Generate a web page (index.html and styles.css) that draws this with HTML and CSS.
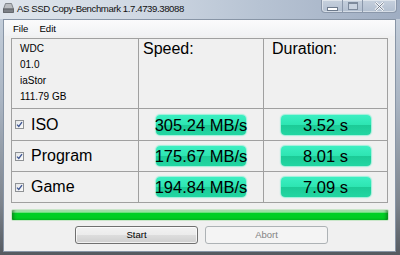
FILE: index.html
```html
<!DOCTYPE html>
<html>
<head>
<meta charset="utf-8">
<link rel="stylesheet" href="styles.css">
</head>
<body>
<div class="window">
  <div class="titlebar">
    <svg class="appicon" width="11" height="10" viewBox="0 0 11 10">
      <polygon points="2.5,0.5 8.5,0.5 10.5,6 0.5,6" fill="#b9bcc0" stroke="#6f7378" stroke-width="0.8"/>
      <rect x="0.5" y="6" width="10" height="3.5" fill="#7c8086" stroke="#55595e" stroke-width="0.8"/>
    </svg>
    <span class="title">AS SSD Copy-Benchmark 1.7.4739.38088</span>
    <div class="ctrls">
      <div class="cbtn min"><span class="minbar"></span></div>
      <div class="cbtn max"><span class="maxbox"></span></div>
      <div class="cbtn close">
        <svg width="11" height="9" viewBox="0 0 11 9"><path d="M1.5 0.8 L9.5 8.2 M9.5 0.8 L1.5 8.2" stroke="#ffffff" stroke-width="2.4"/><path d="M1.5 0.8 L9.5 8.2 M9.5 0.8 L1.5 8.2" stroke="#6d7a8c" stroke-width="1"/></svg>
      </div>
    </div>
  </div>
  <div class="client">
    <div class="menubar">
      <span class="menuitem">File</span>
      <span class="menuitem">Edit</span>
    </div>
    <div class="grid">
      <div class="cell info">
        <div>WDC</div>
        <div>01.0</div>
        <div>iaStor</div>
        <div>111.79 GB</div>
      </div>
      <div class="cell head speedhead">Speed:</div>
      <div class="cell head durhead">Duration:</div>

      <div class="cell label"><span class="chk"><svg width="7" height="7" viewBox="0 0 7 7"><path d="M1 3.6 L2.8 5.5 L6 1.2" fill="none" stroke="#3d5592" stroke-width="1.3"/></svg></span>ISO</div>
      <div class="cell val"><div class="pill">305.24 MB/s</div></div>
      <div class="cell val"><div class="pill">3.52 s</div></div>

      <div class="cell label"><span class="chk"><svg width="7" height="7" viewBox="0 0 7 7"><path d="M1 3.6 L2.8 5.5 L6 1.2" fill="none" stroke="#3d5592" stroke-width="1.3"/></svg></span>Program</div>
      <div class="cell val"><div class="pill">175.67 MB/s</div></div>
      <div class="cell val"><div class="pill">8.01 s</div></div>

      <div class="cell label"><span class="chk"><svg width="7" height="7" viewBox="0 0 7 7"><path d="M1 3.6 L2.8 5.5 L6 1.2" fill="none" stroke="#3d5592" stroke-width="1.3"/></svg></span>Game</div>
      <div class="cell val"><div class="pill">194.84 MB/s</div></div>
      <div class="cell val"><div class="pill">7.09 s</div></div>
    </div>
    <div class="progress"><div class="fill"></div></div>
    <div class="buttons">
      <div class="btn">Start</div>
      <div class="btn disabled">Abort</div>
    </div>
  </div>
</div>
</body>
</html>
```
FILE: styles.css
```css
html, body {
  margin: 0;
  padding: 0;
  width: 400px;
  height: 255px;
  overflow: hidden;
  background: #6a7078;
}
.window {
  width: 400px;
  height: 255px;
  display: flex;
  flex-direction: column;
  background: linear-gradient(to bottom, #c9d3df 0%, #a9b4c2 40%, #7d848d 80%, #555a60 100%);
  font-family: "Liberation Sans", Arial, sans-serif;
}
.titlebar {
  height: 19px;
  display: flex;
  align-items: flex-start;
  background: linear-gradient(to right, #dfe5ec 0%, #cfd8e3 35%, #b7c3d3 65%, #9fadc2 100%);
  position: relative;
}
.appicon {
  margin: 3px 0 0 3px;
}
.title {
  margin: 3px 0 0 3px;
  font-size: 9.6px;
  letter-spacing: -0.4px;
  color: #111;
  line-height: 11px;
  white-space: nowrap;
}
.ctrls {
  margin-left: auto;
  margin-right: 3px;
  display: flex;
  height: 12px;
  border: 1px solid #8a97aa;
  border-top: none;
  border-radius: 0 0 4px 4px;
  background: linear-gradient(to bottom, #c6d0dd, #b2bfd0);
  box-shadow: inset 0 0 0 1px rgba(255,255,255,0.45);
}
.cbtn {
  display: flex;
  align-items: center;
  justify-content: center;
}
.min { width: 20px; border-right: 1px solid #8a97aa; }
.max { width: 19px; border-right: 1px solid #8a97aa; }
.close { width: 33px; }
.minbar {
  width: 9px;
  height: 2px;
  margin-top: 5px;
  background: #fff;
  border: 1px solid #6d7a8c;
}
.maxbox {
  width: 8px;
  height: 5px;
  border: 1px solid #7d8a9c;
  border-top-width: 2px;
  background: #c9d3e0;
}
.client {
  flex: 1;
  margin: 0 4px 3px 3px;
  border: 1px solid #8895a6;
  background: #f0f0f0;
  display: flex;
  flex-direction: column;
}
.menubar {
  height: 16px;
  display: flex;
  align-items: center;
  gap: 11px;
  padding-left: 9px;
  background: linear-gradient(to bottom, #fbfbfc, #f1f2f4);
  font-size: 9.6px;
  color: #000;
}
.grid {
  margin: 2px 0 0 7px;
  width: 377px;
  display: grid;
  grid-template-columns: 126px 124px 123px;
  grid-template-rows: 69px 31px 30px 30px;
  gap: 1px;
  border: 1px solid #a0a0a0;
  background: #a0a0a0;
  box-sizing: border-box;
  height: 165px;
}
.cell {
  background: #f0f0f0;
}
.info {
  padding: 2px 0 0 8px;
  font-size: 10px;
  line-height: 16px;
  color: #000;
}
.head {
  font-size: 16px;
  padding-top: 1px;
  color: #000;
}
.speedhead { padding-left: 4px; }
.durhead { padding-left: 8px; }
.label {
  display: flex;
  align-items: center;
  font-size: 16px;
  color: #000;
  padding-left: 3px;
}
.chk {
  width: 7px;
  height: 7px;
  border: 1px solid #8f9295;
  background: linear-gradient(to bottom right, #e4e6e8, #fbfbfb);
  margin-right: 7px;
  display: flex;
  align-items: center;
  justify-content: center;
}
.val {
  display: flex;
  align-items: center;
  justify-content: center;
}
.pill {
  width: 90px;
  height: 20px;
  border-radius: 4px;
  background: linear-gradient(to bottom, #3cefc2 0%, #2de5b2 50%, #1ccb97 52%, #22d6a2 100%);
  box-shadow: 0 0 1px 1px rgba(90, 240, 200, 0.55);
  font-size: 16.5px;
  line-height: 21px;
  text-align: center;
  white-space: nowrap;
  color: #000;
  display: flex;
  justify-content: center;
}
.progress {
  margin: 6px 0 0 7px;
  width: 378px;
  height: 12px;
  box-sizing: border-box;
  border: 1px solid #c9e6c9;
  border-radius: 2px;
  background: #e8f3e8;
  padding: 0;
}
.fill {
  height: 100%;
  border-radius: 1px;
  background: linear-gradient(to bottom, #cdf5cf 0%, #8fe49a 22%, #00cf25 34%, #00cc22 100%);
  box-shadow: inset 3px 0 3px -1px rgba(20, 90, 30, 0.55), inset -3px 0 3px -1px rgba(20, 90, 30, 0.55);
}
.buttons {
  display: flex;
  gap: 7px;
  margin: 5px 0 0 71px;
}
.btn {
  width: 123px;
  height: 18px;
  box-sizing: border-box;
  border: 1px solid #707070;
  border-radius: 3px;
  background: linear-gradient(to bottom, #f2f2f2 0%, #ebebeb 50%, #dddddd 51%, #cfcfcf 100%);
  box-shadow: inset 0 0 0 1px rgba(255,255,255,0.7);
  font-size: 9.5px;
  line-height: 16px;
  text-align: center;
  color: #000;
}
.btn.disabled {
  border-color: #adb2b5;
  background: #f4f4f4;
  color: #838383;
  box-shadow: none;
}
```
